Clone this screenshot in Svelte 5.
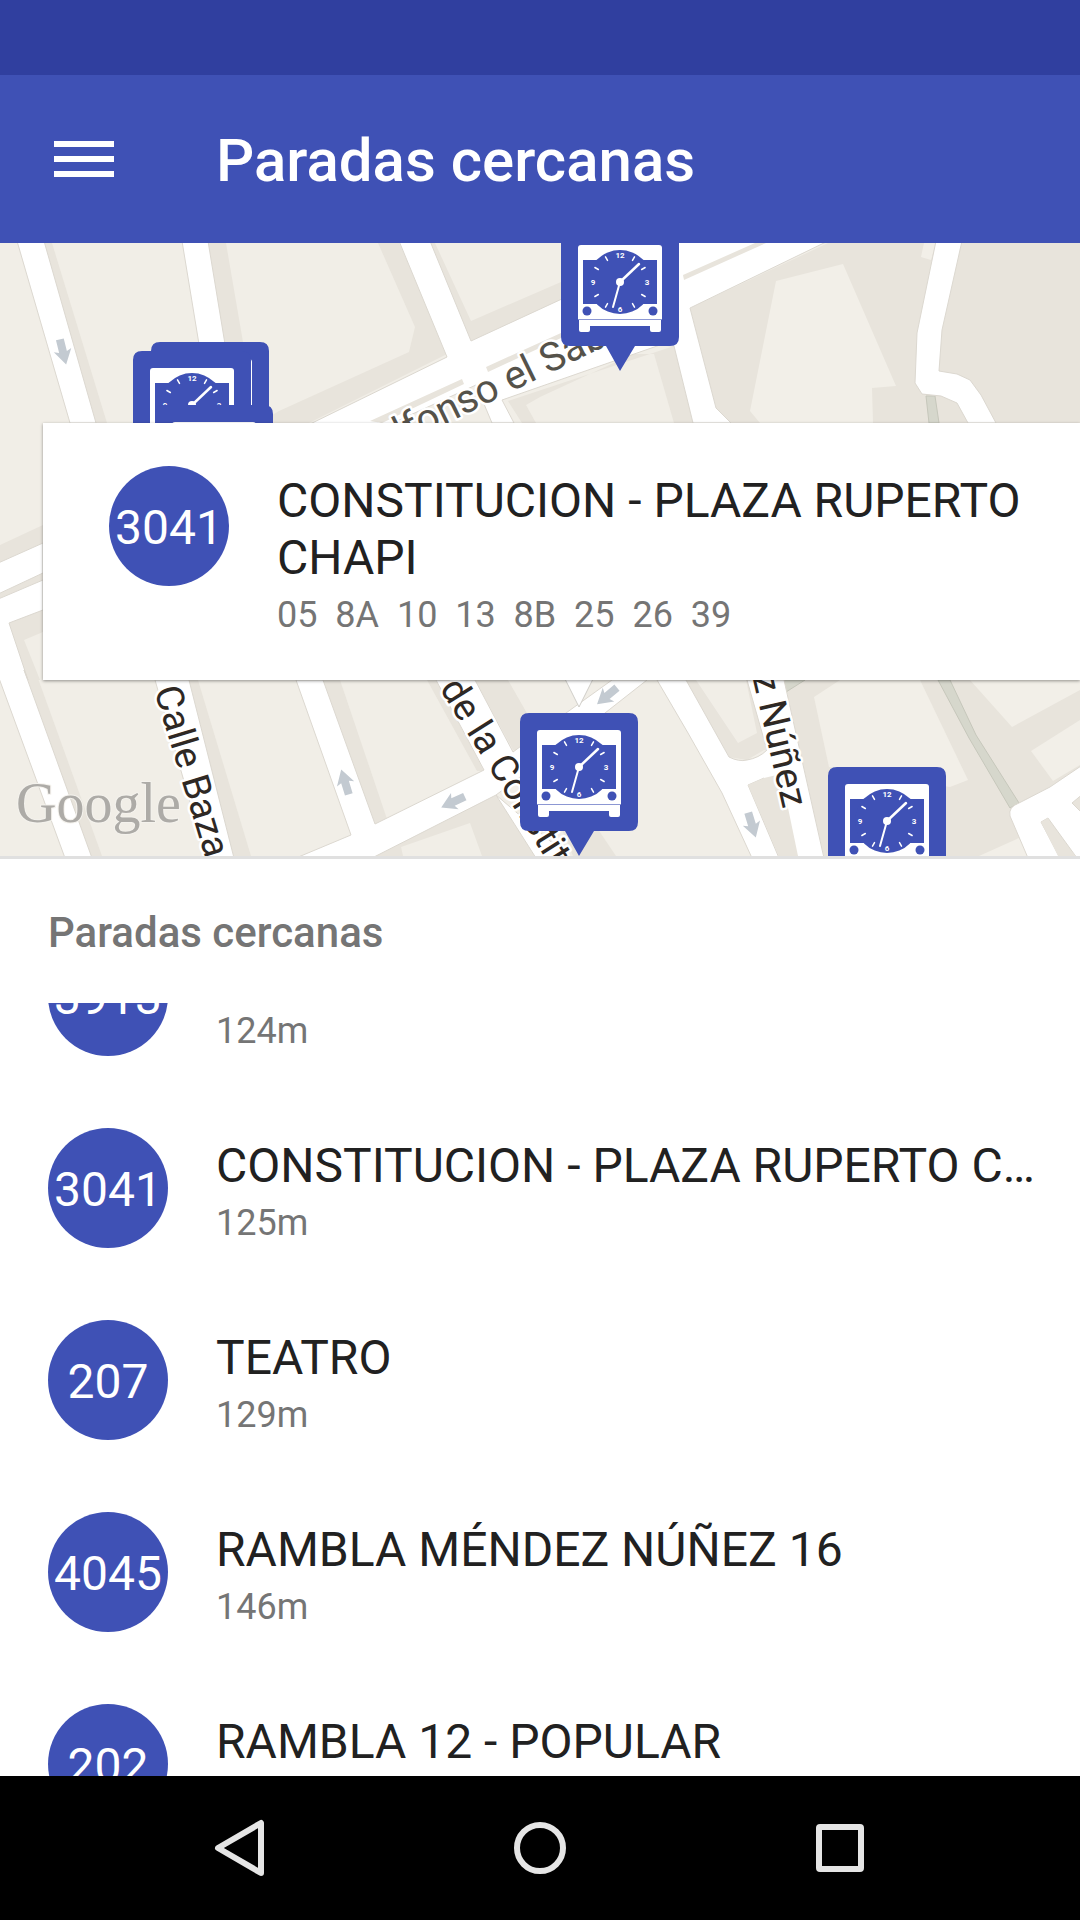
<script lang="ts">
	import { onMount } from 'svelte';

	type Stop = { id: string; name?: string; distance?: string };

	const stops: Stop[] = [
		{ id: '3913', distance: '124m' },
		{ id: '3041', name: 'CONSTITUCION - PLAZA RUPERTO CHAPI', distance: '125m' },
		{ id: '207', name: 'TEATRO', distance: '129m' },
		{ id: '4045', name: 'RAMBLA MÉNDEZ NÚÑEZ 16', distance: '146m' },
		{ id: '202', name: 'RAMBLA 12 - POPULAR' }
	];

	const selected = {
		id: '3041',
		name: 'CONSTITUCION - PLAZA RUPERTO CHAPI',
		lines: ['05', '8A', '10', '13', '8B', '25', '26', '39']
	};

	// x is the centre of the pin, y its top edge
	const pins = [
		{ x: 210, y: 99 },
		{ x: 192, y: 108 },
		{ x: 214, y: 162 },
		{ x: 620, y: -15 },
		{ x: 579, y: 470 },
		{ x: 887, y: 524 }
	];

	const arrows = [
		{ x: 63, y: 109, angle: 76 },
		{ x: 345, y: 539, angle: -107 },
		{ x: 453, y: 559, angle: 155 },
		{ x: 607, y: 453, angle: 140 },
		{ x: 752, y: 582, angle: 73 }
	];

	const ticks = [30, 60, 120, 150, 210, 240, 300, 330];

	let list: HTMLUListElement;

	onMount(() => {
		list.scrollTop = 103;
	});
</script>

<div class="app">
	<div class="status"></div>

	<header>
		<button class="menu" aria-label="Menú">
			<svg width="60" height="36" viewBox="0 0 60 36">
				<path d="M0 0h60v6H0zM0 15h60v6H0zM0 30h60v6H0z" fill="#fff" />
			</svg>
		</button>
		<h1>Paradas cercanas</h1>
	</header>

	<section class="map">
		<svg class="canvas" viewBox="0 0 1080 613" preserveAspectRatio="xMidYMid slice">
			<rect width="1080" height="613" fill="#f1eee7" />

			<g class="ground">
				<path d="M44 0h8l55 180H96z" />
				<path d="M208 0h18l17 99 14 81h-20z" />
				<path d="M378 0l37 84-6 25-130 59-20 12h50l140-70L399 0z" />
				<path d="M430 0h5l36 78 90-39v20l-90 39z" />
				<path d="M508 158l166-55 19 77h-19l-20-69h-21l-93 43-14 8 10 18h-14z" />
				<path d="M690 65L828 0h252v180H731l-15-15z" />
				<path d="M0 302l43-20v18L0 319zM0 350l43-20v7L0 355z" />
				<path d="M9 380l34-15v24l-19 8 16 40H28z" />
				<path d="M24 427h11l67 186H91z" />
				<path d="M189 437h9l53 176h-18z" />
				<path d="M323 437h17l47 139-12 5z" />
				<path d="M427 437h9l48 91h-7z" />
				<path d="M475 437h33l20 35v35h-15z" />
				<path d="M372 613l124-61 40 61h-54l-12-33-69 24 2 9z" />
				<path d="M555 570h32l29 43h-43z" />
				<path d="M686 437h10l42 63 19-10-11-53h10l13 70-5 0-17 10-18-3z" />
				<path d="M748 542l16-7h18l16 78h-19z" />
				<path d="M784 437h296v176H824z" />
			</g>

			<g fill="#f2efe8">
				<path d="M776 38l67-17 53 122-24 2 1 35H760l-10-12z" />
				<path d="M924 0h12l-5 17-10-3z" />
				<path d="M814 454l26-17h80l48 100-18 7-121-20z" />
				<path d="M970 437l42 47 68-37v-10z" />
				<path d="M1031 508l49-31v45l-27 16z" />
				<path d="M979 613l40-18 9 18z" />
			</g>

			<g class="path">
				<path d="M926 153h9l4 27h-10z" />
				<path d="M938 437h12l26 55 43 68-9 5-41-70z" />
				<path d="M784 437h21l-19 12z" />
			</g>

			<g class="road">
				<path d="M17-2h27l52 182H70z" />
				<path d="M182-2h26l30 182h-26z" />
				<path d="M399-2h31l41 100 119-55 89-45h149L690 65l26 100 15 15h-38l-19-77-14-1-158 55 12 23h-22l-16-38-92 42H304l143-70z" />
				<path d="M936-2h26l-20 89-3 41 18 3 13 6 11 15 15 28h-28l-11-20-16-7-19-2-7-11 2-50z" />
				<path d="M-4 321l47-21v30L-4 352zM-4 357l47-20v30L9 380l19 57-4-10 68 188H65L-4 427z" />
				<path d="M155 437h34l45 178h-28z" />
				<path d="M296 437h27l52 144 109-54-48-90h39l38 72 53-39 46-33h35l-42 33-109 82 74 63h-34l-40-63-124 63h-76l55-23z" />
				<path d="M657 437h29l43 77q10 5 18 3 12-2 20-10l-20-70h37l40 178h-26l-34-80-16 7 31 73h-27l-30-65-34-60z" />
				<path d="M1084 521l-34 23-31 16q-11 4-9 13l18 42h32l-19-36 7-4 29 40h7v-43l-12-12 12-10z" />
			</g>

			<g class="ground">
				<path d="M370 178l92-42 2 5-82 39zM486 124l75-34v5l-73 34z" />
				<path d="M683 32l72-32h11l-82 37z" />
				<path d="M1041 579l7-4 9 19 19 19h-18z" />
				<path d="M764 535l17-4 17 82h-19l-31-71z" />
			</g>

			{#each arrows as arrow}
				<path
					d="M-13-4H0l-2-5L13 0-2 9l2-5h-13z"
					fill="#c3cad1"
					transform="translate({arrow.x} {arrow.y}) rotate({arrow.angle})"
				/>
			{/each}

			<g class="street">
				<text class="avenue" transform="translate(378 214) rotate(-26)">Alfonso el Sabio</text>
				<text transform="translate(154 447) rotate(73)">Calle Bazar</text>
				<text transform="translate(439 445) rotate(58)">de la Constitución</text>
				<text transform="translate(783 566) rotate(77)" text-anchor="end">Méndez Núñez</text>
			</g>

			<text class="google" x="16" y="579">Google</text>

			{#each pins as pin}
				<g transform="translate({pin.x} {pin.y})">
					<path
						d="M-50 0H50Q59 0 59 9V109Q59 118 50 118H15L0 143-14 118H-50Q-59 118-59 109V9Q-59 0-50 0z"
						fill="#3f51b5"
					/>
					<path d="M-39 17h78q3 0 3 3v71h-84V20q0-3 3-3z" fill="#fff" />
					<path d="M-41 92h82v10q0 2-2 2h-7q-2 0-2-2v-4h-60v4q0 2-2 2h-7q-2 0-2-2z" fill="#fff" />
					<path d="M-42 91.5h84" stroke="#8c97d3" />
					<path d="M-37 32h74v44h-74z" fill="#3f51b5" />
					<circle cy="54" r="32" fill="#3f51b5" />
					<circle cx="-33" cy="83" r="4.5" fill="#3f51b5" />
					<circle cx="33" cy="83" r="4.5" fill="#3f51b5" />
					<g stroke="#fff" stroke-linecap="round">
						{#each ticks as tick}
							<path d="M0-29v4" stroke-width="1.5" transform="translate(0 54) rotate({tick})" />
						{/each}
						<path d="M0 54L19 36" stroke-width="2.5" />
						<path d="M0 54l-7 25" stroke-width="2" />
					</g>
					<circle cy="54" r="4" fill="#fff" />
					<g class="hours">
						<text y="30">12</text>
						<text x="27" y="57">3</text>
						<text y="84">6</text>
						<text x="-27" y="57">9</text>
					</g>
				</g>
			{/each}

			<path class="tail" d="M564 434l15 30 15-30z" />
		</svg>

		<article class="card">
			<span class="badge">{selected.id}</span>
			<div class="info">
				<h2>{selected.name}</h2>
				<p>{selected.lines.join('  ')}</p>
			</div>
		</article>
	</section>

	<h3>Paradas cercanas</h3>

	<ul bind:this={list}>
		{#each stops as stop (stop.id)}
			<li>
				<button class="row">
					<span class="badge">{stop.id}</span>
					<span class="info">
						<span class="name">{stop.name}</span>
						<span class="distance">{stop.distance}</span>
					</span>
				</button>
			</li>
		{/each}
	</ul>

	<nav>
		<button aria-label="Atrás">
			<svg width="60" height="60" viewBox="0 0 60 60">
				<path d="M51 5v50L8 30z" />
			</svg>
		</button>
		<button aria-label="Inicio">
			<svg width="60" height="60" viewBox="0 0 60 60">
				<circle cx="30" cy="30" r="23" />
			</svg>
		</button>
		<button aria-label="Recientes">
			<svg width="60" height="60" viewBox="0 0 60 60">
				<rect x="9" y="9" width="42" height="42" rx="1" />
			</svg>
		</button>
	</nav>
</div>

<style>
	:global(body) {
		margin: 0;
	}

	.app {
		display: flex;
		flex-direction: column;
		height: 100vh;
		background: #fff;
		font-family: Roboto, sans-serif;
		color: #212121;
	}

	button {
		background: none;
		border: none;
		padding: 0;
		font: inherit;
		color: inherit;
		cursor: pointer;
	}

	svg {
		display: block;
	}

	.status {
		flex: none;
		height: 75px;
		background: #303f9f;
	}

	header {
		flex: none;
		display: flex;
		align-items: center;
		gap: 102px;
		height: 168px;
		padding: 0 54px;
		background: #3f51b5;
		color: #fff;
	}

	h1 {
		margin: 0;
		padding-top: 4px;
		font-size: 60px;
		line-height: 72px;
		font-weight: 500;
	}

	.map {
		flex: none;
		position: relative;
		overflow: hidden;
		border-bottom: 3px solid #e0e0e0;
	}

	.canvas {
		width: 100%;
		height: auto;
	}

	.ground {
		fill: #e8e4dc;
	}

	.road {
		fill: #fff;
		stroke: #dcd8d0;
		stroke-width: 1px;
	}

	.path {
		fill: #d6d7cc;
		stroke: #c6c7bb;
		stroke-width: 1px;
	}

	.tail {
		fill: #fff;
		stroke: #d0cec9;
		stroke-width: 1px;
	}

	.street text {
		font-size: 38px;
		fill: #2e2824;
		stroke: #fff;
		stroke-width: 5px;
		stroke-linejoin: round;
		paint-order: stroke;
	}

	.street .avenue {
		font-size: 40px;
		fill: #55524a;
	}

	.google {
		font-family: 'Liberation Serif', serif;
		font-size: 56px;
		fill: #adaba7;
		stroke: #f4f2ed;
		stroke-width: 2px;
		paint-order: stroke;
	}

	.hours text {
		font-size: 8px;
		font-weight: 700;
		fill: #fff;
		text-anchor: middle;
	}

	.card {
		position: absolute;
		top: 180px;
		left: 43px;
		right: 0;
		display: flex;
		gap: 48px;
		box-sizing: border-box;
		padding: 43px 48px 41px 66px;
		background: #fff;
		box-shadow: 0 1px 3px rgba(0, 0, 0, 0.4);
	}

	.badge {
		flex: none;
		display: flex;
		align-items: center;
		justify-content: center;
		box-sizing: border-box;
		width: 120px;
		height: 120px;
		padding-top: 4px;
		border-radius: 50%;
		background: #3f51b5;
		color: #fff;
		font-size: 48px;
		line-height: 60px;
	}

	.info {
		flex: 1;
		min-width: 0;
		padding-top: 6px;
	}

	h2 {
		margin: 0;
		font-size: 48px;
		line-height: 57px;
		font-weight: 400;
	}

	p {
		margin: 5px 0 0;
		font-size: 36px;
		line-height: 48px;
		color: #757575;
		white-space: pre;
	}

	h3 {
		flex: none;
		margin: 0;
		padding: 4px 48px 0;
		font-size: 42px;
		line-height: 140px;
		font-weight: 500;
		color: #757575;
	}

	ul {
		flex: 1;
		min-height: 0;
		margin: 0;
		padding: 0;
		list-style: none;
		overflow-y: auto;
		scrollbar-width: none;
	}

	.row {
		display: flex;
		align-items: flex-start;
		gap: 48px;
		width: 100%;
		padding: 36px 40px 36px 48px;
		text-align: left;
	}

	.row .info {
		display: flex;
		flex-direction: column;
		gap: 5px;
		padding-top: 9px;
	}

	.name {
		min-height: 57px;
		font-size: 48px;
		line-height: 57px;
		white-space: nowrap;
		overflow: hidden;
		text-overflow: ellipsis;
	}

	.distance {
		font-size: 36px;
		line-height: 48px;
		color: #757575;
	}

	nav {
		flex: none;
		display: grid;
		grid-template-columns: repeat(3, 1fr);
		height: 144px;
		padding: 0 90px;
		background: #000;
	}

	nav button {
		display: flex;
		align-items: center;
		justify-content: center;
	}

	nav svg {
		fill: none;
		stroke: #e5e5e5;
		stroke-width: 6px;
		stroke-linejoin: round;
	}
</style>
